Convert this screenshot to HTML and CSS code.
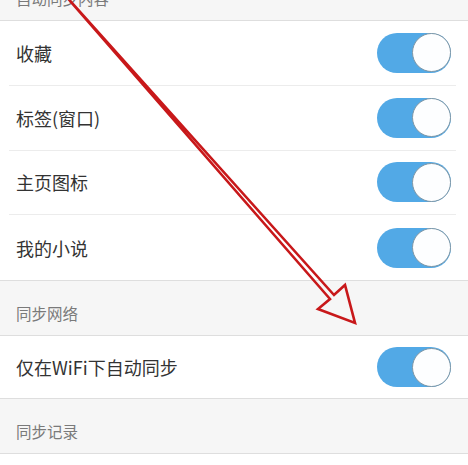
FILE: index.html
```html
<!DOCTYPE html>
<html lang="zh">
<head>
<meta charset="utf-8">
<link rel="stylesheet" href="styles.css">
</head>
<body>
<div class="screen">
  <div class="header first">自动同步内容</div>
  <div class="group">
    <div class="row"><div class="inner"><span class="label">收藏</span><span class="toggle"><span class="knob"></span></span></div></div>
    <div class="row"><div class="inner"><span class="label">标签(窗口)</span><span class="toggle"><span class="knob"></span></span></div></div>
    <div class="row"><div class="inner"><span class="label">主页图标</span><span class="toggle"><span class="knob"></span></span></div></div>
    <div class="row"><div class="inner"><span class="label">我的小说</span><span class="toggle"><span class="knob"></span></span></div></div>
  </div>
  <div class="header">同步网络</div>
  <div class="group">
    <div class="row wifi"><div class="inner"><span class="label">仅在WiFi下自动同步</span><span class="toggle"><span class="knob"></span></span></div></div>
  </div>
  <div class="header">同步记录</div>
  <svg class="arrow" width="468" height="465" viewBox="0 0 468 465">
    <polygon points="64,-6 334,295 345,285 355,323 318,309 330,299 64,-6" />
  </svg>
</div>
</body>
</html>
```
FILE: styles.css
```css
html, body {
  margin: 0;
  padding: 0;
  background: #ffffff;
}
body {
  font-family: "Noto Sans CJK SC", "Noto Sans", sans-serif;
  overflow: hidden;
  width: 468px;
  height: 465px;
}
.screen {
  position: relative;
  width: 468px;
  height: 465px;
  overflow: hidden;
}
.header {
  box-sizing: border-box;
  height: 55px;
  background: #f6f6f6;
  border-bottom: 1px solid #dedede;
  padding-left: 16px;
  display: flex;
  align-items: flex-end;
  padding-bottom: 12px;
  font-size: 15.5px;
  line-height: 20px;
  color: #7a7a7a;
}
.header.first {
  margin-top: -34px;
}
.group {
  background: #ffffff;
  border-bottom: 1px solid #dedede;
}
.row {
  box-sizing: border-box;
  height: 64.75px;
  padding: 0 12px 0 9px;
}
.row.wifi {
  height: 62px;
}
.inner {
  box-sizing: border-box;
  height: 100%;
  display: flex;
  align-items: center;
  justify-content: space-between;
  padding: 0 5px 0 7px;
  border-bottom: 1px solid #ececec;
}
.row:last-child .inner {
  border-bottom: none;
}
.label {
  font-size: 18px;
  color: #333333;
  line-height: 24px;
}
.toggle {
  position: relative;
  width: 74px;
  height: 40px;
  border-radius: 20px;
  background: #52a9e6;
  display: flex;
  align-items: center;
  justify-content: flex-end;
}
.knob {
  box-sizing: border-box;
  width: 39px;
  height: 39px;
  border-radius: 50%;
  background: #fdfeff;
  border: 1.5px solid #7f97a6;
}
.arrow {
  position: absolute;
  left: 0;
  top: 0;
  pointer-events: none;
}
.arrow polygon {
  fill: none;
  stroke: #c8181a;
  stroke-width: 2.6;
  stroke-linejoin: miter;
}
```
